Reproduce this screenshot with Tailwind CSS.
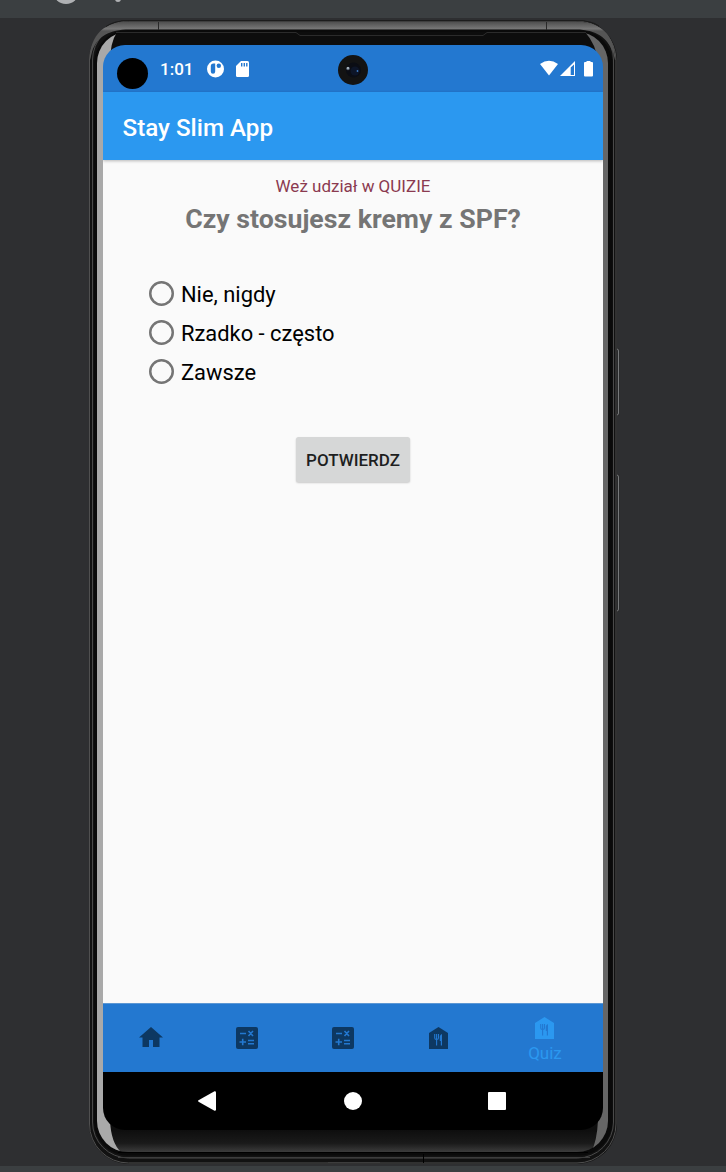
<!DOCTYPE html>
<html lang="pl">
<head>
<meta charset="utf-8">
<title>Stay Slim App</title>
<script src="https://cdn.jsdelivr.net/npm/@tailwindcss/browser@4"></script>
</head>
<body class="bg-[#2e2f31] font-['Roboto',sans-serif]">
<div class="relative flex h-[1172px] w-[726px] flex-col overflow-hidden">
  <!-- emulator toolbar -->
  <header class="h-[18px] shrink-0 bg-[#3b3f41]">
    <svg class="block" width="726" height="18"><circle cx="66" cy="-9" r="13" fill="#afb1b3"/><circle cx="118" cy="-1" r="3" fill="#afb1b3"/></svg>
  </header>

  <!-- device frame -->
  <svg class="absolute left-0 top-0" width="726" height="1172" viewBox="0 0 726 1172" fill="none">
    <defs>
      <linearGradient id="rim" x1="0" y1="20" x2="0" y2="31" gradientUnits="userSpaceOnUse"><stop offset="0" stop-color="#444"/><stop offset=".8" stop-color="#777"/><stop offset="1" stop-color="#555"/></linearGradient>
      <linearGradient id="glass" x1="0" y1="1130" x2="0" y2="1152" gradientUnits="userSpaceOnUse"><stop offset="0" stop-color="#0e0e0e"/><stop offset=".6" stop-color="#1a1a1a"/><stop offset="1" stop-color="#3c3c3c"/></linearGradient>
      <clipPath id="inner"><rect x="97" y="32" width="511" height="1120" rx="31"/></clipPath>
      <clipPath id="top"><rect x="80" y="15" width="550" height="45"/></clipPath>
    </defs>
    <path d="M616 348h2q1.500 0 1.500 2v64q0 2-1.500 2h-2z" fill="#292a2b"/><path d="M616 349h1q1.500 0 1.500 2v62q0 2-1.500 2" stroke="#77797a"/>
    <path d="M616 474h2q1.500 0 1.500 2v134q0 2-1.500 2h-2z" fill="#292a2b"/><path d="M616 475h1q1.500 0 1.500 2v132q0 2-1.500 2" stroke="#77797a"/>
    <rect x="89" y="20" width="528" height="1144" rx="40" fill="#121212"/>
    <rect x="89.500" y="21" width="526.500" height="1142" rx="39" stroke="#505050"/>
    <rect x="92.500" y="24" width="521" height="1134" rx="36" stroke="#4a4a4a"/>
    <g clip-path="url(#top)">
      <path d="M89.500 62C89.500 35 104 21.500 129 21.500H576C602 21.500 615.500 36 615.500 62L613 52C607 38 597 29.500 576 29.500H129C110 29.500 97 36 92 52z" fill="url(#rim)"/>
      <path d="M106 26.500Q114 20.500 129 20.500H576Q592 20.500 599 26" stroke="#1c1c1c"/>
    </g>
    <path d="M158.500 22v8M546.500 22v8" stroke="#292929"/>
    <rect x="94" y="30" width="518.500" height="1125.500" rx="34" fill="#0a0a0a"/>
    <g clip-path="url(#inner)">
      <rect x="97" y="32" width="511" height="1120" fill="#0d0d0d"/>
      <rect x="97" y="1130" width="511" height="22" fill="url(#glass)"/>
      <path d="M97 32H117Q110 43 110 62V1120Q111 1143 121 1152H97z" fill="#a9a9a9"/>
      <path d="M608 32H585Q596 44 598 62V1120Q597 1142 591 1152H608z" fill="#666"/>
    </g>
    <path d="M116 32.500H296l4 3H483l4-3H586" stroke="#2b2b2b"/>
    <path d="M118 1152.500H588" stroke="#000"/>
    <path d="M118 1157.500H590M328 1162.500H380" stroke="#3d3d3d"/>
    <path d="M423.500 1154v9" stroke="#000"/>
  </svg>

  <!-- device screen -->
  <main class="relative ml-[103px] mt-[27px] flex h-[1085px] w-[500px] shrink-0 flex-col overflow-hidden rounded-[22px]">
    <div class="flex h-[47px] shrink-0 items-center bg-[#2378d0] text-white">
      <div class="ml-[14px] mt-[10px] size-[31px] rounded-full bg-black"></div>
      <span class="ml-[12px] w-[35px] text-[17px] font-medium leading-5">1:01</span>
      <svg class="ml-[12px] mt-px" width="17" height="18" viewBox="0 0 17 18"><circle cx="8.500" cy="9" r="8.500" fill="#fff"/><path d="M8.200 3.500v8a2.200 2.200 0 0 1-4.400 0V6.200A2.700 2.700 0 0 1 6.500 3.500z" fill="#2378d0"/><circle cx="11.800" cy="5.800" r="2.200" fill="#2378d0"/></svg>
      <svg class="ml-[12px] mt-px" width="13" height="16" viewBox="0 0 13 16"><path d="M5 0h6.500Q13 0 13 1.500v13q0 1.500-1.500 1.500h-10Q0 16 0 14.500V5z" fill="#fff"/><path d="M5.700 2v3.500M8.300 2v3.500M10.800 2v3.500" stroke="#2378d0" stroke-width="1.400"/></svg>
      <svg class="ml-[89px] mt-[3px]" width="30" height="30" viewBox="0 0 30 30"><circle cx="15" cy="15" r="15" fill="#131313"/><circle cx="15.500" cy="15" r="7.500" fill="#0b0d14"/><circle cx="17" cy="16" r="4.500" fill="#0d1528"/><circle cx="10" cy="13.500" r="1.800" fill="#5d6878"/><circle cx="10" cy="13" r=".9" fill="#c5d2dc"/><circle cx="19.500" cy="16" r=".9" fill="#3d7cc4"/></svg>
      <svg class="ml-[172px]" width="54" height="17" viewBox="0 0 54 17" fill="#fff"><path d="M0 4Q9 -2.500 18 4L9 15.500z"/><path d="M35 1v15H20z"/><path d="M30.700 7.500l3.300-3V15H30.700z" fill="#2378d0"/><path d="M46.500 1h4v1H52q1 0 1 1v12.500q0 1-1 1h-7q-1 0-1-1V3q0-1 1-1h1.500z"/></svg>
    </div>
    <div class="z-10 flex h-[68px] shrink-0 items-center bg-[#2b98f0] pl-[19.500px] pt-[4px] text-[24.200px] font-medium text-white shadow-[0_1px_3px_#0004]">Stay Slim App</div>

    <section class="flex flex-1 flex-col bg-[#fafafa]">
      <p class="mt-4 text-center text-[17px] leading-5 text-[#8b3a50]">Weż udział w QUIZIE</p>
      <h1 class="mt-[7px] text-center text-[26.700px] font-bold leading-8 text-[#757575]">Czy stosujesz kremy z SPF?</h1>
      <div class="ml-[46px] mt-[39px] flex flex-col text-[21.900px] text-black">
        <label class="flex h-[39px] items-center gap-[7px]"><span class="size-[25px] rounded-full shadow-[inset_0_0_0_2.5px_#757575]"></span><span class="pt-[3px]">Nie, nigdy</span></label>
        <label class="flex h-[39px] items-center gap-[7px]"><span class="size-[25px] rounded-full shadow-[inset_0_0_0_2.5px_#757575]"></span><span class="pt-[3px]">Rzadko - często</span></label>
        <label class="flex h-[39px] items-center gap-[7px]"><span class="size-[25px] rounded-full shadow-[inset_0_0_0_2.5px_#757575]"></span><span class="pt-[3px]">Zawsze</span></label>
      </div>
      <button class="ml-[193px] mt-[46px] h-[45px] w-[114px] rounded-[2.500px] bg-[#d6d7d7] pt-[2px] text-[17px] font-medium text-[#1e1f1f] shadow-[0_1px_2px_#0003]">POTWIERDZ</button>
    </section>

    <nav class="flex h-[69px] shrink-0 border-t border-[#5c97d4] bg-[#2378d0]">
      <div class="flex w-24 items-center justify-center pb-[2px]"><svg width="24" height="20" viewBox="0 0 24 20" fill="#0d3862"><path d="M12 0 24 10.500H20.500V20H14V13H10V20H3.500V10.500H0z"/></svg></div>
      <div class="flex w-24 items-center justify-center pb-px"><svg width="22" height="22" viewBox="0 0 22 22"><rect width="22" height="22" rx="2" fill="#0d3862"/><path d="M4 6.500h6M12.500 4l4.500 5M17 4l-4.500 5M3.500 15h6.500M6.700 11.800v6.500M12 13.500h6M12 16.700h6" stroke="#2378d0" stroke-width="1.600"/></svg></div>
      <div class="flex w-24 items-center justify-center pb-px"><svg width="22" height="22" viewBox="0 0 22 22"><rect width="22" height="22" rx="2" fill="#0d3862"/><path d="M4 6.500h6M12.500 4l4.500 5M17 4l-4.500 5M3.500 15h6.500M6.700 11.800v6.500M12 13.500h6M12 16.700h6" stroke="#2378d0" stroke-width="1.600"/></svg></div>
      <div class="flex w-24 items-center justify-center pb-px pr-px"><svg width="19" height="22" viewBox="0 0 19 22"><path d="M9.500 0 19 6V22H0V6z" fill="#0d3862"/><path d="M5.700 7v4q0 1.500 1.900 1.500T9.500 11V7M7.600 7v11.500" stroke="#2378d0" stroke-width="1.100" fill="none"/><path d="M13 7v11.500h-1.200V14H10.800V9.500Q11 7.500 13 7z" fill="#2378d0"/></svg></div>
      <div class="flex flex-1 flex-col items-center pt-[13px]"><svg class="-ml-px" width="19" height="22" viewBox="0 0 19 22"><path d="M9.500 0 19 6V22H0V6z" fill="#2b98f0"/><path d="M5.700 7v4q0 1.500 1.900 1.500T9.500 11V7M7.600 7v11.500" stroke="#2378d0" stroke-width="1.100" fill="none"/><path d="M13 7v11.500h-1.200V14H10.800V9.500Q11 7.500 13 7z" fill="#2378d0"/></svg><span class="mt-1 text-[17px] leading-5 text-[#2b98f0]">Quiz</span></div>
    </nav>
    <div class="flex h-[58px] shrink-0 items-center bg-black">
      <svg class="ml-[95px]" width="18" height="20" viewBox="0 0 18 20" fill="#fff"><path d="M.5 9.300 16.500.2Q18 0 18 1.500V18.500Q18 20 16.500 19.800L.5 10.700Q-.3 10 .5 9.300z"/></svg>
      <div class="ml-[128px] size-[18px] rounded-full bg-white"></div>
      <div class="ml-[126px] size-[18px] rounded-[1px] bg-white"></div>
    </div>
  </main>
  <footer class="absolute inset-x-0 bottom-0 h-[6px] bg-[#3b3f41]"></footer>
</div>
</body>
</html>
